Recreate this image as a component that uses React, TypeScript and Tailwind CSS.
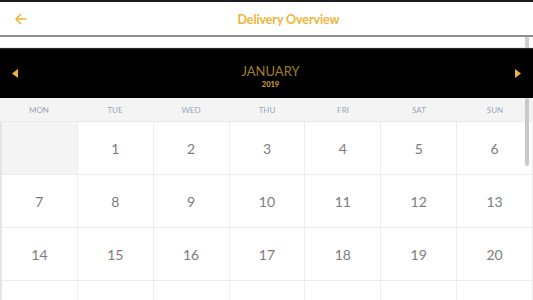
import React from 'react';

const weekdays = ['MON', 'TUE', 'WED', 'THU', 'FRI', 'SAT', 'SUN'];

const weeks: (number | null)[][] = [
  [null, 1, 2, 3, 4, 5, 6],
  [7, 8, 9, 10, 11, 12, 13],
  [14, 15, 16, 17, 18, 19, 20],
];

export default function App() {
  return (
    <div className="relative w-[533px] h-[300px] overflow-hidden bg-white font-['Lato','Liberation_Sans',sans-serif]">
      <div className="h-[2px] bg-[#1c1c1c]" />

      {/* Header */}
      <div className="relative h-[33px] flex items-center justify-center pt-[4px] pl-[44px]">
        <svg className="absolute left-[14px] top-[11px]" width="13" height="12" viewBox="0 0 13 12" fill="none">
          <path d="M12 6H2M6.5 1.5L2 6l4.5 4.5" stroke="#f0b43a" strokeWidth="1.6" strokeLinecap="round" strokeLinejoin="round" />
        </svg>
        <span className="text-[12.5px] font-bold text-[#f0b43a] tracking-[-0.1px]">Delivery Overview</span>
      </div>
      <div className="h-[2px] bg-[#8e8e8e]" />

      {/* strip */}
      <div className="relative h-[11px] bg-white border-b border-[#ececec]">
        <div className="absolute right-[4px] top-0 w-[4px] h-[11px] bg-[#cfcfcf]" />
      </div>

      {/* Month bar */}
      <div className="h-[50px] bg-black border-t border-[#2a2a2a] flex items-center justify-between px-[12px]">
        <svg width="6" height="9" viewBox="0 0 6 9">
          <path d="M6 0L0 4.5L6 9Z" fill="#f0b43a" />
        </svg>
        <div className="flex flex-col items-center pt-[7px] pl-[8px]">
          <span className="text-[13px] leading-[15px] font-normal text-[#a07e28]">JANUARY</span>
          <span className="text-[7.5px] leading-[12px] font-black text-[#c99a2c]">2019</span>
        </div>
        <svg width="6" height="9" viewBox="0 0 6 9">
          <path d="M0 0L6 4.5L0 9Z" fill="#f0b43a" />
        </svg>
      </div>

      {/* Weekdays */}
      <div className="grid grid-cols-7 h-[24px] bg-[#f4f4f4] pl-[1px] border-b border-[#ebebeb]">
        {weekdays.map((d) => (
          <div key={d} className="flex items-center justify-center text-[8px] text-[#9ba6b9]">
            {d}
          </div>
        ))}
      </div>

      {/* Days grid */}
      <div className="border-l-2 border-[#e6e6e6]">
        {weeks.map((week, i) => (
          <div key={i} className="grid grid-cols-7 h-[53px] border-b border-[#ededed]">
            {week.map((day, j) => (
              <div
                key={j}
                className={`flex items-center justify-center text-[14px] text-[#7c7c7c] border-r border-[#ededed] ${
                  day === null ? 'bg-[#f4f4f4]' : 'bg-white'
                }`}
              >
                {day}
              </div>
            ))}
          </div>
        ))}
        <div className="grid grid-cols-7 h-[53px]">
          {weekdays.map((d) => (
            <div key={d} className="border-r border-[#ededed] bg-white" />
          ))}
        </div>
      </div>

      {/* scrollbar */}
      <div className="absolute right-[4px] top-[98px] w-[4px] h-[68px] rounded-full bg-[#c9c9c9]" />
    </div>
  );
}
